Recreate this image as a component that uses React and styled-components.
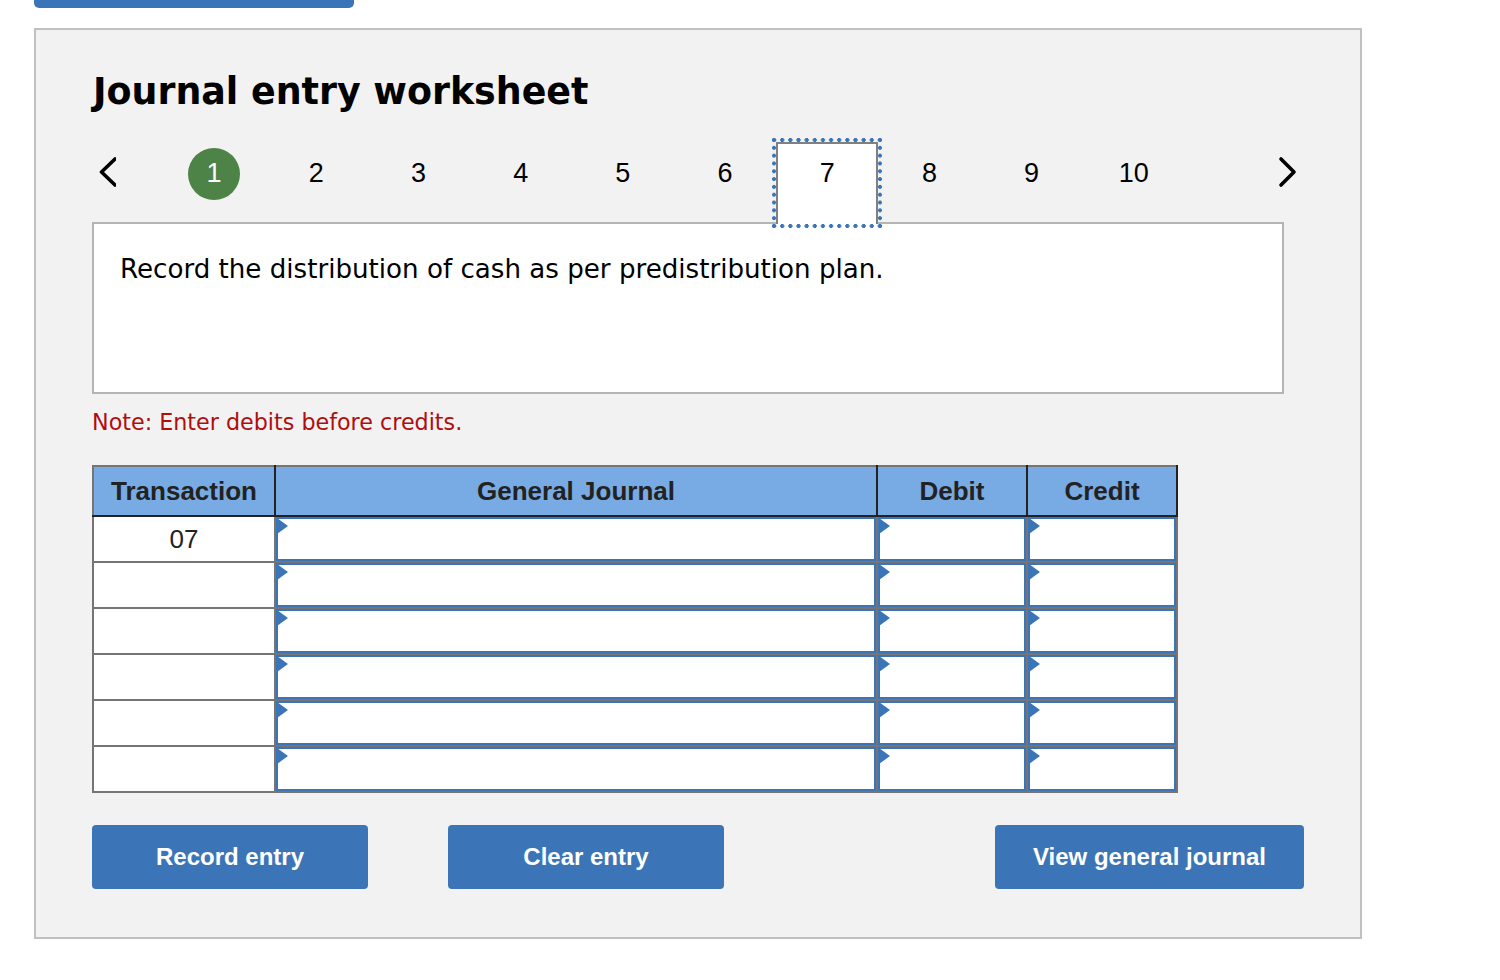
import React from 'react';
import styled, { createGlobalStyle } from 'styled-components';

const GlobalStyle = createGlobalStyle`
  html, body {
    margin: 0;
    padding: 0;
    background: #fff;
  }
  body {
    font-family: "Liberation Sans", Arial, sans-serif;
    color: #000;
  }
`;

const BLUE = '#3b75b8';
const STEPS = [1, 2, 3, 4, 5, 6, 7, 8, 9, 10];
const ROWS = ['07', '', '', '', '', ''];

const Page = styled.div`
  width: 1500px;
  height: 980px;
  padding: 0 0 0 34px;
  box-sizing: border-box;
  overflow: hidden;
`;

const TopBar = styled.div`
  width: 320px;
  height: 8px;
  margin-bottom: 20px;
  background: ${BLUE};
  border-radius: 0 0 5px 5px;
`;

const Panel = styled.section`
  width: 1328px;
  height: 911px;
  box-sizing: border-box;
  padding: 37px 56px 0;
  background: #f2f2f2;
  border: 2px solid #c0c0c0;
`;

const Title = styled.h2`
  margin: 0 0 0 1px;
  font-family: "DejaVu Sans", Verdana, sans-serif;
  font-size: 36.4px;
  line-height: 50px;
  font-weight: 700;
  color: #000;
`;

const Nav = styled.nav`
  position: relative;
  z-index: 1;
  display: flex;
  align-items: flex-start;
  height: 82px;
  margin: 25px 0 -2px;
`;

const Arrow = styled.button`
  display: flex;
  align-items: center;
  flex: 0 0 ${(p) => p.$width}px;
  height: 60px;
  margin-left: ${(p) => p.$offset || 0}px;
  padding: 0;
  background: none;
  border: 0;
`;

const Step = styled.div`
  position: relative;
  flex: 0 0 102.2px;
  height: 82px;
  box-sizing: border-box;
  display: flex;
  justify-content: center;
  padding-top: 6px;
  font-size: 27px;
  ${(p) =>
    p.$current &&
    `
    background: #fff;
    border: 2px solid #808080;
    border-bottom: 0;
    padding-top: 4px;
    &::after {
      content: '';
      position: absolute;
      top: -6px;
      left: -6px;
      right: -6px;
      bottom: -4px;
      pointer-events: none;
      background-image:
        radial-gradient(circle, ${BLUE} 1.8px, transparent 2.2px),
        radial-gradient(circle, ${BLUE} 1.8px, transparent 2.2px),
        radial-gradient(circle, ${BLUE} 1.8px, transparent 2.2px),
        radial-gradient(circle, ${BLUE} 1.8px, transparent 2.2px);
      background-size: 8.15px 4px, 8.15px 4px, 4px 7.82px, 4px 7.82px;
      background-position: -2px 0, -2px 100%, 0 -1.9px, 100% -1.9px;
      background-repeat: repeat-x, repeat-x, repeat-y, repeat-y;
    }
  `}
`;

const StepLabel = styled.span`
  display: block;
  width: 52px;
  height: 52px;
  line-height: 50px;
  text-align: center;
  border-radius: 50%;
  ${(p) => p.$done && 'background: #4d8346; color: #fff;'}
`;

const Prompt = styled.div`
  width: 1192px;
  height: 172px;
  box-sizing: border-box;
  padding: 27px 26px;
  background: #fff;
  border: 2px solid #b5b5b5;
  font-family: "DejaVu Sans", Verdana, sans-serif;
  font-size: 26.14px;
  line-height: 36px;
`;

const Note = styled.p`
  margin: 13px 0 28px;
  font-family: "DejaVu Sans", Verdana, sans-serif;
  font-size: 22.24px;
  line-height: 30px;
  color: #b00d0d;
`;

const Table = styled.table`
  width: 1086px;
  table-layout: fixed;
  border-collapse: collapse;
  background: #fff;
  color: #222;
  font-size: 26px;
`;

const Th = styled.th`
  height: 48px;
  padding: 0;
  background: #78abe3;
  font-size: 26px;
  font-weight: 700;
  border: 2px solid #222;
  border-top-color: #757575;
  &:first-child {
    border-left-color: #757575;
  }
`;

const Td = styled.td`
  height: 44px;
  padding: 0;
  text-align: center;
  border: 2px solid #757575;
`;

const EntryCell = styled.div`
  position: relative;
  height: 44px;
  box-sizing: border-box;
  border: 2px solid ${BLUE};
  background: #fff;
  &::before {
    content: '';
    position: absolute;
    top: -1px;
    left: -1px;
    border-style: solid;
    border-width: 8px 0 8px 11px;
    border-color: transparent transparent transparent ${BLUE};
  }
`;

const Actions = styled.div`
  display: flex;
  gap: 80px;
  margin-top: 32px;
`;

const ActionButton = styled.button`
  width: ${(p) => p.$width}px;
  height: 64px;
  margin-left: ${(p) => (p.$push ? 'auto' : 0)};
  padding: 0;
  background: ${BLUE};
  border: 0;
  border-radius: 4px;
  color: #fff;
  font-family: "Liberation Sans", Arial, sans-serif;
  font-size: 24px;
  font-weight: 700;
`;

function Chevron({ points }) {
  return (
    <svg width="24" height="36" viewBox="0 0 24 36" fill="none" stroke="#000" strokeWidth="3.6" strokeLinecap="round" strokeLinejoin="round">
      <polyline points={points} />
    </svg>
  );
}

export default function App() {
  return (
    <Page>
      <GlobalStyle />
      <TopBar />
      <Panel>
        <Title>Journal entry worksheet</Title>
        <Nav>
          <Arrow $width={71}>
            <Chevron points="23,5 9.5,18 23,31" />
          </Arrow>
          {STEPS.map((n) => (
            <Step key={n} $current={n === 7}>
              <StepLabel $done={n === 1}>{n}</StepLabel>
            </Step>
          ))}
          <Arrow $width={24} $offset={91}>
            <Chevron points="5,5 18,18 5,31" />
          </Arrow>
        </Nav>
        <Prompt>Record the distribution of cash as per predistribution plan.</Prompt>
        <Note>Note: Enter debits before credits.</Note>
        <Table>
          <colgroup>
            <col style={{ width: 182 }} />
            <col style={{ width: 602 }} />
            <col style={{ width: 150 }} />
            <col style={{ width: 150 }} />
          </colgroup>
          <thead>
            <tr>
              <Th>Transaction</Th>
              <Th>General Journal</Th>
              <Th>Debit</Th>
              <Th>Credit</Th>
            </tr>
          </thead>
          <tbody>
            {ROWS.map((t, i) => (
              <tr key={i}>
                <Td>{t}</Td>
                <Td><EntryCell /></Td>
                <Td><EntryCell /></Td>
                <Td><EntryCell /></Td>
              </tr>
            ))}
          </tbody>
        </Table>
        <Actions>
          <ActionButton $width={276}>Record entry</ActionButton>
          <ActionButton $width={276}>Clear entry</ActionButton>
          <ActionButton $width={309} $push>View general journal</ActionButton>
        </Actions>
      </Panel>
    </Page>
  );
}
